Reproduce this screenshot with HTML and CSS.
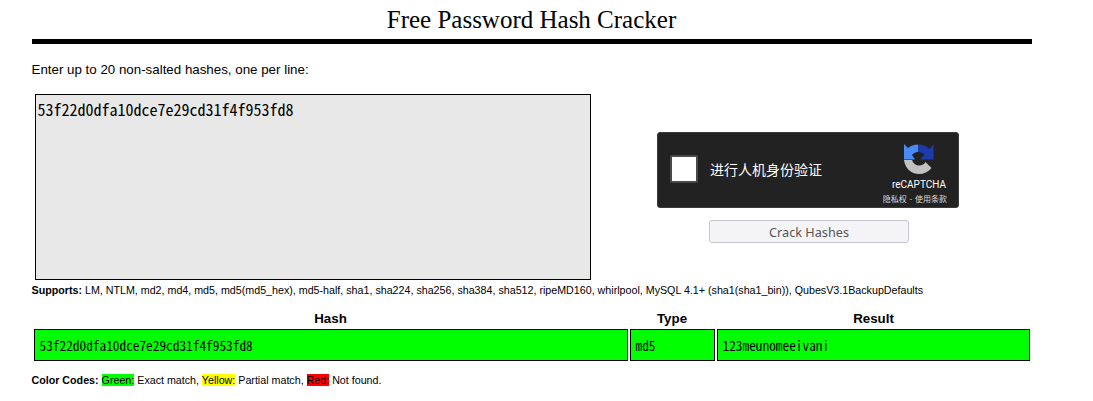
FILE: index.html
```html
<!doctype html>
<html lang="en">
  <head>
    <meta charset="UTF-8" />
    <title>Free Password Hash Cracker</title>
    <link rel="stylesheet" href="styles.css">
  </head>

  <body>
    <div id="content">
      <h1>Free Password Hash Cracker</h1>
      <div class="rule"></div>
      <p class="intro">Enter up to 20 non-salted hashes, one per line:</p>

      <div class="crack-form">
        <div class="hash-input">53f22d0dfa10dce7e29cd31f4f953fd8</div>
        <div class="form-side">
          <div class="captcha">
            <div class="captcha-box"></div>
            <div class="captcha-label">进行人机身份验证</div>
            <div class="captcha-logo">
              <svg width="34" height="34" viewBox="0 0 34 34">
                <path fill="#c1c1c1" d="M2 18H10C11 21 13.500 23.500 17 23.500C20 23.500 22.500 22 23.500 20L29.500 26C26 30 22 32 17 32C9 32 3 26 2 18Z" />
                <path fill="#4a8af4" d="M16 2.500V10C13 10 11 11.500 10 13L13 17.500H2V2L6 6C8.500 3.800 12 2.500 16 2.500Z" />
                <path fill="#1c3aa9" d="M16 2.500C21 2.500 25 4.500 27.500 7L31.500 2.500V17.500H18L22.500 12.500C21 11 19 10 16 10Z" />
              </svg>
              <div class="captcha-brand">reCAPTCHA</div>
              <div class="captcha-terms">隐私权 - 使用条款</div>
            </div>
          </div>
          <button class="crack-button">Crack Hashes</button>
        </div>
      </div>

      <p class="supports"><strong>Supports:</strong> LM, NTLM, md2, md4, md5, md5(md5_hex), md5-half, sha1, sha224, sha256, sha384, sha512, ripeMD160, whirlpool, MySQL 4.1+ (sha1(sha1_bin)), QubesV3.1BackupDefaults</p>

      <table class="results">
        <tr>
          <th class="col-hash">Hash</th>
          <th class="col-type">Type</th>
          <th>Result</th>
        </tr>
        <tr>
          <td>53f22d0dfa10dce7e29cd31f4f953fd8</td>
          <td>md5</td>
          <td>123meunomeeivani</td>
        </tr>
      </table>

      <p class="codes"><strong>Color Codes:</strong> <span class="green">Green:</span> Exact match, <span class="yellow">Yellow:</span> Partial match, <span class="red">Red:</span> Not found.</p>
    </div>
  </body>
</html>
```

FILE: styles.css
```css
body {
  margin: 0;
  background: #fff;
  color: #000;
  font-family: "Liberation Sans", Arial, sans-serif;
}

#content {
  width: 1000px;
  margin-left: 32px;
}

h1 {
  margin: 0;
  padding: 4px 1px 0 0;
  height: 39px;
  box-sizing: border-box;
  font-family: "Liberation Serif", serif;
  font-size: 25px;
  font-weight: normal;
  line-height: 31px;
  text-align: center;
}

.rule {
  height: 5px;
  background: #000;
}

.intro {
  margin: 18px 0 0 -0.5px;
  font-size: 13.33px;
  line-height: 16px;
}

.crack-form {
  display: flex;
  margin-top: 16px;
  padding-left: 3px;
}

.hash-input {
  width: 556px;
  height: 186px;
  box-sizing: border-box;
  padding: 3px 1.5px;
  border: 1px solid #000;
  background: #e8e8e8;
  font-family: "Noto Sans Mono CJK SC", "DejaVu Sans Mono", monospace;
  font-size: 16px;
  line-height: 23px;
}

.form-side {
  width: 434px;
  display: flex;
  flex-direction: column;
  align-items: center;
  padding-top: 38px;
}

.captcha {
  width: 302px;
  height: 76px;
  box-sizing: border-box;
  display: flex;
  align-items: center;
  padding-left: 12px;
  border: 1px solid #3a3a3a;
  border-radius: 3px;
  background: #222;
  color: #fff;
  font-family: "Noto Sans CJK SC", sans-serif;
}

.captcha-box {
  width: 28px;
  height: 28px;
  margin-top: -2px;
  box-sizing: border-box;
  border: 2px solid #4a4a4a;
  border-radius: 2px;
  background: #fff;
}

.captcha-label {
  flex: 1;
  margin: -2px 0 0 12px;
  font-size: 14px;
  line-height: 18px;
}

.captcha-logo {
  align-self: stretch;
  margin-right: 11px;
  display: flex;
  flex-direction: column;
  align-items: flex-end;
  padding-top: 9px;
}

.captcha-logo svg {
  display: block;
  margin-right: 11px;
  filter: blur(0.4px);
}

.captcha-brand {
  margin-top: 3px;
  margin-right: 1px;
  font-family: Roboto, sans-serif;
  font-size: 10px;
  line-height: 12px;
}

.captcha-terms {
  margin-top: 2px;
  font-size: 8px;
  line-height: 11px;
  word-spacing: 1px;
  color: #ddd;
  white-space: nowrap;
}

.crack-button {
  width: 200px;
  height: 23px;
  margin-top: 12px;
  margin-left: 2px;
  padding: 0;
  border: 1px solid #c6c6cc;
  border-radius: 3px;
  background: #f4f4f7;
  color: #555;
  font-family: "Noto Sans", sans-serif;
  font-size: 12.7px;
}

.supports {
  margin: 4px 0 0 -0.5px;
  font-size: 10.69px;
  line-height: 13px;
}

.results {
  width: 1000px;
  margin-top: 12px;
  border-collapse: separate;
  border-spacing: 2px;
  table-layout: fixed;
}

.results th {
  padding: 0;
  font-size: 13.33px;
  line-height: 16px;
}

.results .col-hash {
  width: 593px;
  padding-right: 1px;
}

.results .col-type {
  width: 84px;
  padding-right: 1px;
}

.results td {
  height: 32px;
  box-sizing: border-box;
  padding: 0 4.5px;
  border: 1px solid #000;
  background: #0f0;
  font-family: "Noto Sans Mono CJK SC", "DejaVu Sans Mono", monospace;
  font-size: 13.33px;
}

.codes {
  margin: 11px 0 0 -0.5px;
  font-size: 10.69px;
  line-height: 13px;
}

.green {
  background: #0f0;
}

.yellow {
  background: #ff0;
}

.red {
  background: #f00;
}
```
